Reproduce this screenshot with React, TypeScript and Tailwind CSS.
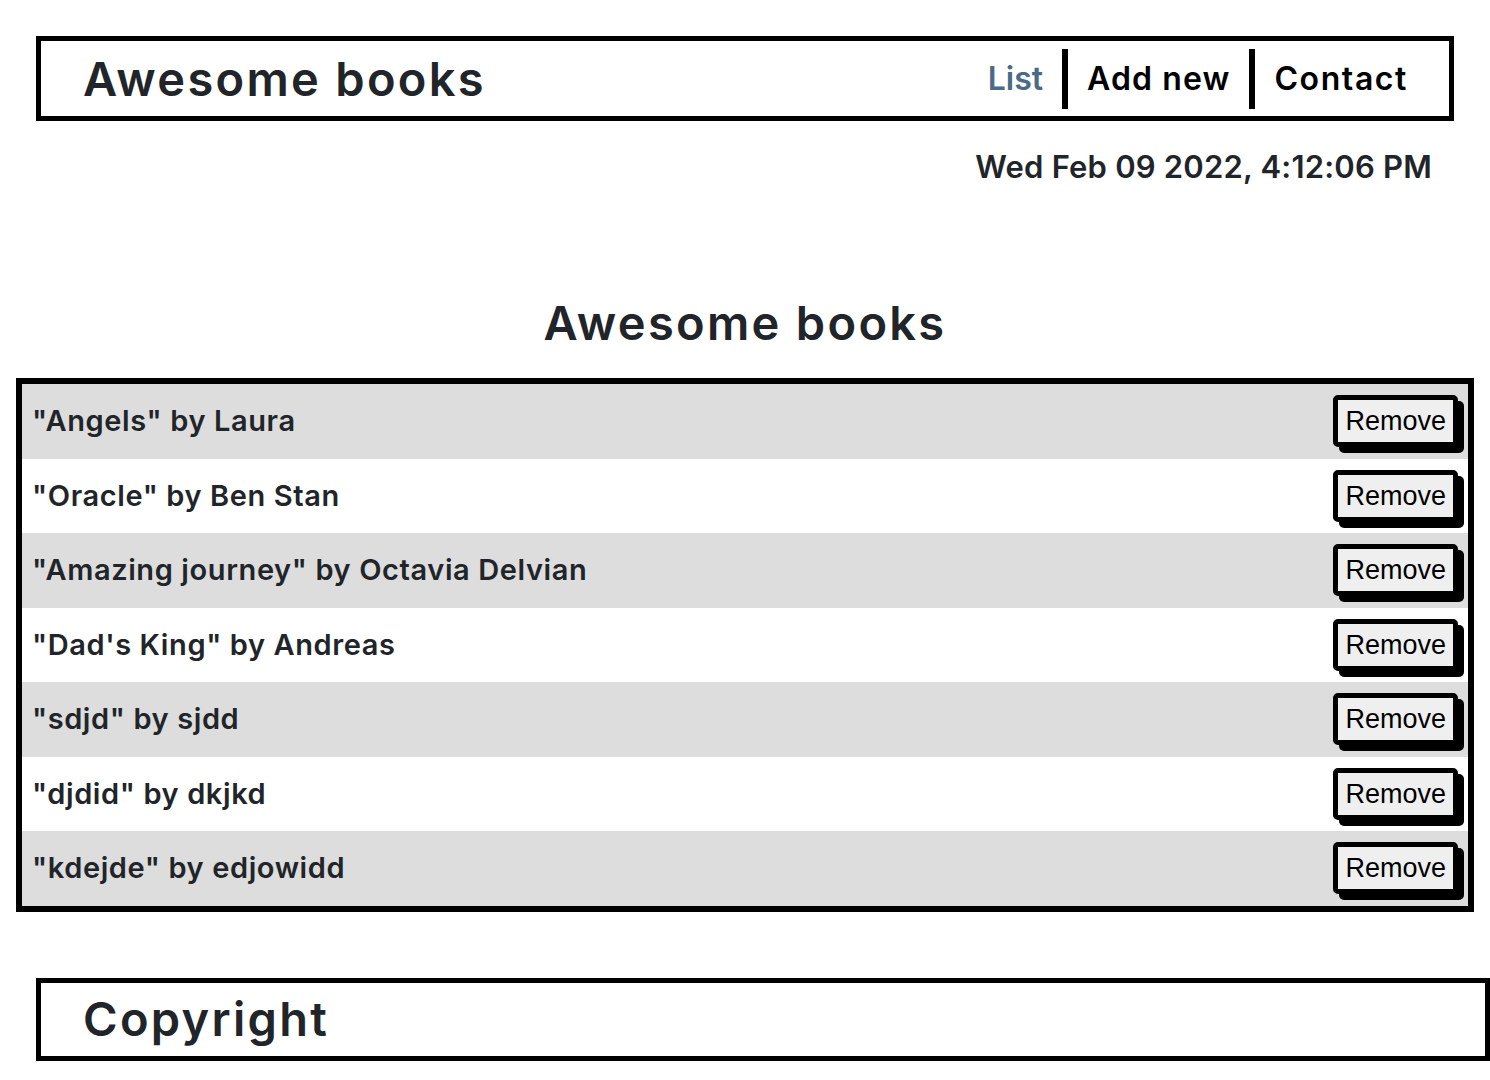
import React from 'react';

const books = [
  { title: 'Angels', author: 'Laura' },
  { title: 'Oracle', author: 'Ben Stan' },
  { title: 'Amazing journey', author: 'Octavia Delvian' },
  { title: "Dad's King", author: 'Andreas' },
  { title: 'sdjd', author: 'sjdd' },
  { title: 'djdid', author: 'dkjkd' },
  { title: 'kdejde', author: 'edjowidd' },
];

const Bar = () => <span className="block w-[6px] h-[60px] bg-black mx-[19px]" />;

export default function App() {
  return (
    <div className="font-['Inter','Noto_Sans',sans-serif] text-[#212529] bg-white min-h-[1080px] overflow-hidden">
      <header className="mx-[36px] mt-[36px] h-[85px] border-[5px] border-black flex items-center justify-between pl-[42px] pr-[41px]">
        <h1 className="text-[47px] leading-[56px] font-semibold tracking-[2.3px]">Awesome books</h1>
        <nav className="flex items-center text-[32px] leading-[40px] font-semibold tracking-[1.1px]">
          <a className="text-[#4b6a88] tracking-normal">List</a>
          <Bar />
          <a className="text-black">Add new</a>
          <Bar />
          <a className="text-black tracking-[1.6px]">Contact</a>
        </nav>
      </header>

      <p className="mt-[26px] pr-[58px] text-right text-[31px] leading-[40px] font-semibold tracking-[0.2px]">
        Wed Feb 09 2022, 4:12:06 PM
      </p>

      <h2 className="mt-[108px] text-center text-[47px] leading-[56px] font-semibold tracking-[2.3px]">Awesome books</h2>

      <ul className="mx-[16px] mt-[27px] border-[6px] border-black">
        {books.map((b, i) => (
          <li
            key={i}
            className={`h-[74.5px] flex items-center justify-between pl-[10px] pr-[10px] ${
              i % 2 === 0 ? 'bg-[#dddddd]' : 'bg-white'
            }`}
          >
            <span className="text-[29px] leading-[36px] font-semibold tracking-[0.6px]">
              "{b.title}" by {b.author}
            </span>
            <button className="font-['Liberation_Sans',Arial,sans-serif] text-[27px] leading-[30px] text-black bg-[#efefef] border-[5px] border-black rounded-[5px] px-[7px] py-[6px] shadow-[6px_6px_0_#000]">
              Remove
            </button>
          </li>
        ))}
      </ul>

      <footer className="ml-[36px] mt-[66px] h-[83px] border-[5px] border-black flex items-center pl-[42px]">
        <p className="text-[47px] leading-[56px] font-semibold tracking-[2.3px]">Copyright</p>
      </footer>
    </div>
  );
}
